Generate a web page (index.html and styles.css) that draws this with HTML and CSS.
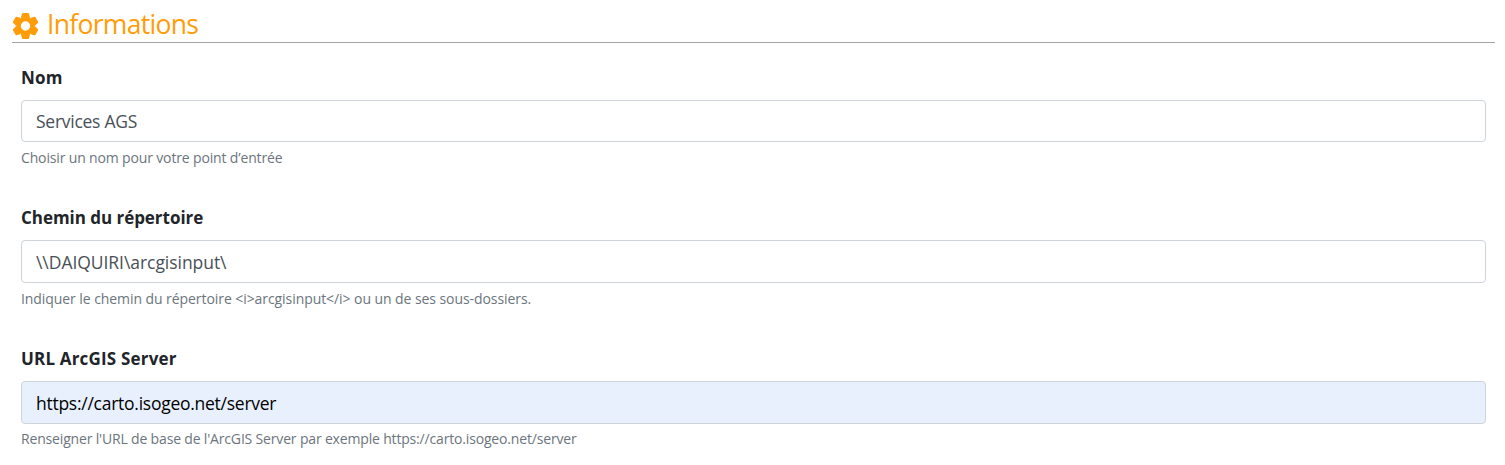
FILE: index.html
```html
<!DOCTYPE html>
<html lang="fr">
<head>
<meta charset="utf-8">
<title>Informations</title>
<link rel="stylesheet" href="styles.css">
</head>
<body>
<main class="panel">
  <h1 class="panel-title">
    <svg class="icon" viewBox="-13.5 -13 27 26" aria-hidden="true">
      <circle r="7" fill="none" stroke="currentColor" stroke-width="4.6"/>
      <path d="M-4.6-8 -3.5-12.2Q-3.3-13-2.5-13H2.5Q3.3-13 3.5-12.2L4.6-8Q0-9 -4.6-8z"/>
      <path transform="rotate(60)" d="M-4.6-8 -3.5-12.2Q-3.3-13-2.5-13H2.5Q3.3-13 3.5-12.2L4.6-8Q0-9 -4.6-8z"/>
      <path transform="rotate(120)" d="M-4.6-8 -3.5-12.2Q-3.3-13-2.5-13H2.5Q3.3-13 3.5-12.2L4.6-8Q0-9 -4.6-8z"/>
      <path transform="rotate(180)" d="M-4.6-8 -3.5-12.2Q-3.3-13-2.5-13H2.5Q3.3-13 3.5-12.2L4.6-8Q0-9 -4.6-8z"/>
      <path transform="rotate(240)" d="M-4.6-8 -3.5-12.2Q-3.3-13-2.5-13H2.5Q3.3-13 3.5-12.2L4.6-8Q0-9 -4.6-8z"/>
      <path transform="rotate(300)" d="M-4.6-8 -3.5-12.2Q-3.3-13-2.5-13H2.5Q3.3-13 3.5-12.2L4.6-8Q0-9 -4.6-8z"/>
    </svg>
    <span>Informations</span>
  </h1>
  <form class="fields">
    <div class="field field-name">
      <label class="label">Nom</label>
      <div class="control">Services AGS</div>
      <small class="help">Choisir un nom pour votre point d’entrée</small>
    </div>
    <div class="field field-path">
      <label class="label">Chemin du répertoire</label>
      <div class="control">\\DAIQUIRI\arcgisinput\</div>
      <small class="help">Indiquer le chemin du répertoire &lt;i&gt;arcgisinput&lt;/i&gt; ou un de ses sous-dossiers.</small>
    </div>
    <div class="field field-url">
      <label class="label">URL ArcGIS Server</label>
      <div class="control filled">https://carto.isogeo.net/server</div>
      <small class="help">Renseigner l'URL de base de l'ArcGIS Server par exemple https://carto.isogeo.net/server</small>
    </div>
  </form>
</main>
</body>
</html>
```
FILE: styles.css
```css
* { box-sizing: border-box; }
body { margin: 0; background: #fff; font-family: "Open Sans", "Noto Sans", sans-serif; color: #212529; }
.panel { padding: 0 10px 0 12px; }
.panel-title { display: flex; align-items: center; gap: 8px; height: 43px; margin: 0; padding-top: 6px; border-bottom: 1px solid #a5a5a5; color: #ff9c07; font-size: 26.5px; font-weight: 400; line-height: 37px; letter-spacing: -0.7px; }
.icon { width: 27px; height: 26px; fill: currentColor; margin-top: 4px; }
.fields { padding: 22px 9px 0; }
.field { height: 141px; }
.label { display: block; height: 35px; font-size: 17px; font-weight: 700; line-height: 25px; }
.control { height: 43px; padding: 0 14px; border: 1px solid #ced4da; border-radius: 4px; font-size: 17.5px; line-height: 42px; color: #495057; }
.filled { background: #e8f0fe; color: #000; }
.help { display: block; margin-top: 5px; font-size: 14px; line-height: 22px; color: #6c757d; }

.field-name { height: 140px; }
.field-name .label { letter-spacing: 0.2px; }
.field-name .control { height: 42px; line-height: 40px; letter-spacing: -0.26px; }
.field-name .help { letter-spacing: -0.15px; }
.field-path .label { letter-spacing: -0.04px; }
.field-path .control { letter-spacing: -0.05px; }
.field-path .help { letter-spacing: -0.07px; }
.field-url .label { letter-spacing: 0.18px; }
.field-url .control { letter-spacing: -0.26px; }
.field-url .help { margin-top: 4px; letter-spacing: -0.17px; }
```
